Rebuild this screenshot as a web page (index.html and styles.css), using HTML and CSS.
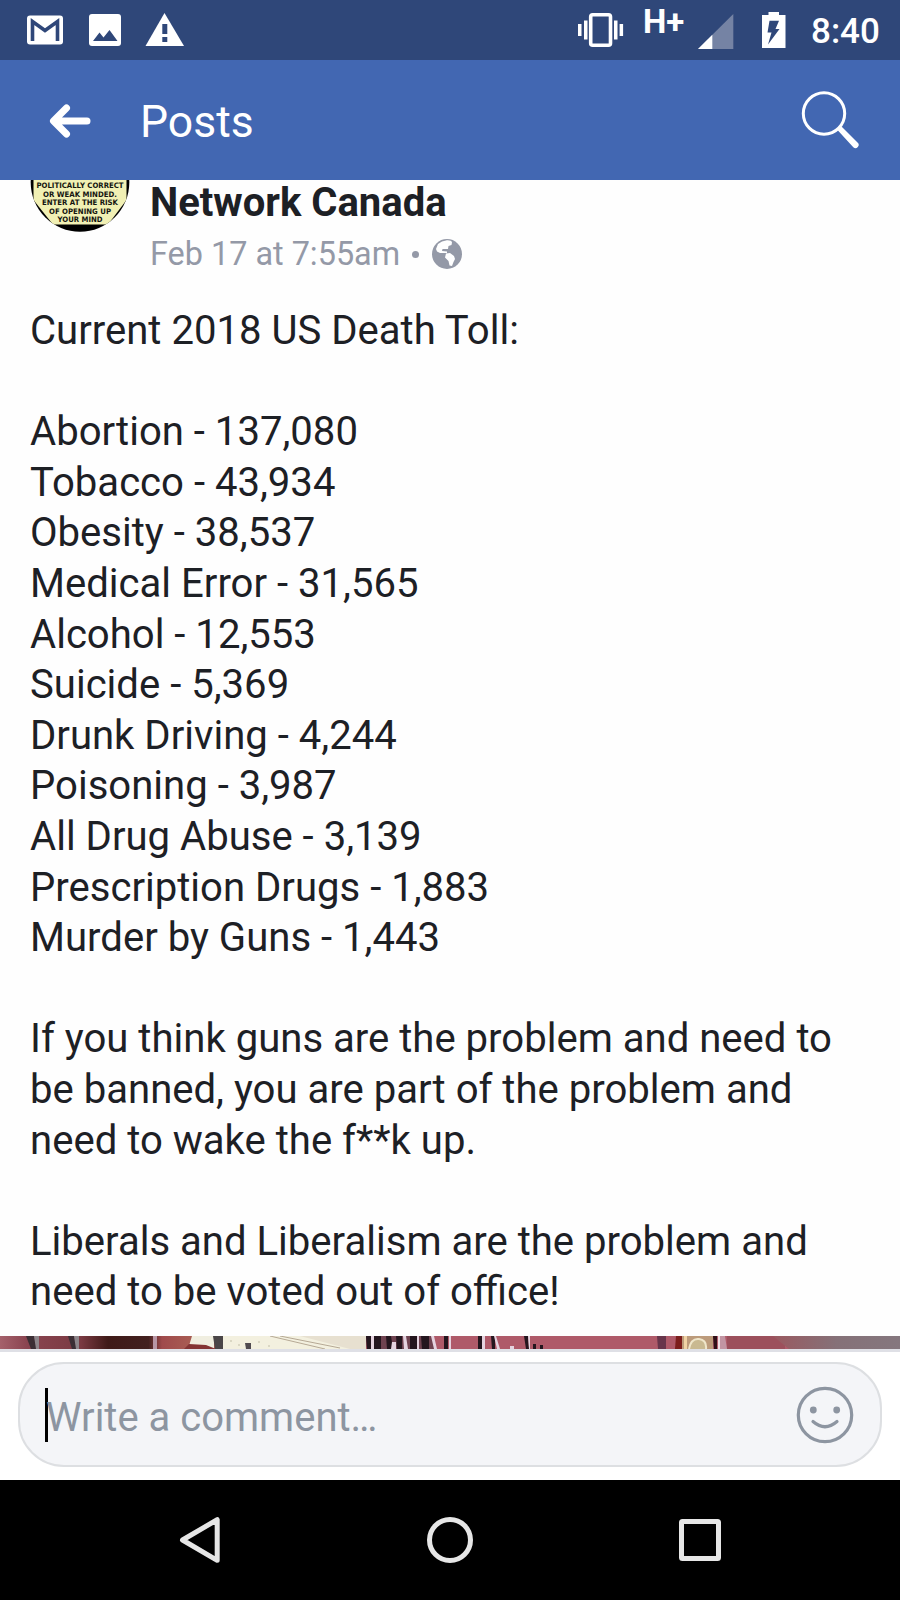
FILE: index.html
```html
<!DOCTYPE html>
<html lang="en">
<head>
  <meta charset="UTF-8">
  <meta name="viewport" content="width=device-width, initial-scale=1.0">
  <title>Posts</title>
  <link rel="stylesheet" href="styles.css">
</head>
<body>
  <!-- Status bar -->
  <div class="status-bar">
    <svg class="status-left" width="200" height="60" viewBox="0 0 200 60">
      <rect x="27" y="15.5" width="36" height="29" rx="3" fill="#fff"/>
      <path d="M32.500 41V21.500L45 30.500L57.500 21.500V41" fill="none" stroke="#2f4779" stroke-width="3.600"/>
      <rect x="89" y="14" width="32" height="32" rx="3" fill="#fff"/>
      <path d="M93 41L99.500 32.500L103.500 37.500L109.500 30L117.500 41Z" fill="#2f4779"/>
      <path d="M164.500 13L184 46H145.500Z" fill="#fff"/>
      <path d="M162.300 24h5v10h-5zM162.300 37h5v5h-5z" fill="#2f4779"/>
    </svg>
    <div class="status-right">
      <svg width="48" height="60" viewBox="576 0 48 60">
        <rect x="590.700" y="14.700" width="19.800" height="30.600" rx="2" fill="none" stroke="#fff" stroke-width="3.600"/>
        <path d="M578 24h3.500v12H578zM584 20.500h3.500v19H584zM614 20.500h3.500v19H614zM619.600 24h3.500v12h-3.500z" fill="#fff"/>
      </svg>
      <span class="network">H+</span>
      <svg width="100" height="60" viewBox="692 0 100 60">
        <path d="M733.300 14V49H698Z" fill="#7583a4"/>
        <path d="M712.300 34.700V49H698Z" fill="#fff"/>
        <path d="M762 15h6.500v-3h10.500v3h6.500v33H762z" fill="#fff"/>
        <path d="M769.500 20.700H779L775.500 29H779.500L768 44.500L771.500 32.500H767.500Z" fill="#2f4779"/>
      </svg>
      <span class="clock">8:40</span>
    </div>
  </div>

  <!-- Header -->
  <div class="header">
    <svg class="back" width="42" height="36" viewBox="0 0 42 36">
      <path d="M38 18H5M17.500 5L4.500 18L17.500 31" fill="none" stroke="#fff" stroke-width="7" stroke-linecap="round" stroke-linejoin="round"/>
    </svg>
    <h1>Posts</h1>
    <svg class="search" width="60" height="60" viewBox="800 90 60 60">
      <circle cx="824" cy="113.500" r="20.700" fill="none" stroke="#fff" stroke-width="3"/>
      <path d="M837 129.500L841.500 126.500L857.500 142.500A3 3 0 0 1 853.300 147.300Z" fill="#fff"/>
    </svg>
  </div>

  <!-- Post -->
  <div class="post">
    <div class="post-head">
      <svg class="avatar" width="100" height="52" viewBox="30 180 100 52">
        <defs>
          <clipPath id="round"><circle cx="80" cy="182.500" r="49.300"/></clipPath>
        </defs>
        <g clip-path="url(#round)">
          <rect x="30" y="180" width="100" height="52" fill="#000"/>
          <path d="M33.500 180H126.500V200L108 224.500H53L33.500 200Z" fill="#f1f0b4"/>
          <g class="avatar-text">
            <text x="80" y="188.300" textLength="87" lengthAdjust="spacingAndGlyphs">POLITICALLY CORRECT</text>
            <text x="80" y="196.700" textLength="74" lengthAdjust="spacingAndGlyphs">OR WEAK MINDED.</text>
            <text x="80" y="205.200" textLength="76" lengthAdjust="spacingAndGlyphs">ENTER AT THE RISK</text>
            <text x="80" y="213.700" textLength="62" lengthAdjust="spacingAndGlyphs">OF OPENING UP</text>
            <text x="80" y="222.200" textLength="45" lengthAdjust="spacingAndGlyphs">YOUR MIND</text>
          </g>
        </g>
      </svg>
      <div class="post-info">
        <h2>Network Canada</h2>
        <div class="date">
          <span class="date-text">Feb 17 at 7:55am</span>
          <span class="dot"></span>
          <svg width="30" height="30" viewBox="0 0 30 30">
            <circle cx="15" cy="15" r="15" fill="#9499a7"/>
            <path d="M14 1.500C17 1 20 2 20 3.500L19.500 6L16.500 7L16 10H10.500L10 12L15 12.500V14H8L5 12.500L4 10L6 5L10 2.500Z" fill="#fff"/>
            <path d="M14 14.500L18 14L22 17L23 20L21.500 23L20 27L17.500 26.500L16.500 22L13 18.500Z" fill="#fff"/>
          </svg>
        </div>
      </div>
    </div>
    <div class="post-text">
      <p>Current 2018 US Death Toll:</p>
      <p>
        Abortion - 137,080<br>
        Tobacco - 43,934<br>
        Obesity - 38,537<br>
        Medical Error - 31,565<br>
        Alcohol - 12,553<br>
        Suicide - 5,369<br>
        Drunk Driving - 4,244<br>
        Poisoning - 3,987<br>
        All Drug Abuse - 3,139<br>
        Prescription Drugs - 1,883<br>
        Murder by Guns - 1,443
      </p>
      <p>
        If you think guns are the problem and need to<br>
        be banned, you are part of the problem and<br>
        need to wake the f**k up.
      </p>
      <p>
        Liberals and Liberalism are the problem and<br>
        need to be voted out of office!
      </p>
    </div>
  </div>

  <!-- Top edge of the attached photo -->
  <svg class="photo" width="900" height="13" viewBox="0 0 900 13">
    <defs>
      <linearGradient id="wall" gradientUnits="userSpaceOnUse" x1="0" x2="900" y1="0" y2="0">
        <stop offset="0" stop-color="#a5616b"/>
        <stop offset="0.030" stop-color="#8a4450"/>
        <stop offset="0.090" stop-color="#7a3a42"/>
        <stop offset="0.120" stop-color="#3f1a18"/>
        <stop offset="0.165" stop-color="#42201f"/>
        <stop offset="0.180" stop-color="#a04a4c"/>
        <stop offset="0.210" stop-color="#a85b52"/>
      </linearGradient>
      <linearGradient id="edge">
        <stop offset="0" stop-color="#9a5960"/>
        <stop offset="0.500" stop-color="#857178"/>
        <stop offset="1" stop-color="#85777e"/>
      </linearGradient>
    </defs>
    <rect width="900" height="13" fill="#af5a69"/>
    <rect width="223" height="13" fill="url(#wall)"/>
    <path d="M26 0h8l3 13h-6zM68 0h6l3 13h-5z" fill="#3b2e34"/>
    <path d="M34 0h5v13h-3zM74 0h5v13h-3z" fill="#8d858a"/>
    <path d="M153 0h4v13h-4z" fill="#b896a5"/>
    <path d="M188 13L192 0H214V13L204 9H190Z" fill="#f0eee0"/>
    <path d="M184 13L189 8L206 9L216 13Z" fill="#843434"/>
    <path d="M213 0h10v13h-8z" fill="#4a4547"/>
    <path d="M223 0H366V13H223Z" fill="#f3f0df"/>
    <path d="M300 0H366V13H350Z" fill="#e7e0d0"/>
    <path d="M270 0L325 13M280 0L340 12" stroke="#b6a995" stroke-width="1"/>
    <path d="M245 7h6v6h-5z" fill="#514b50"/>
    <path d="M230 5h2M238 9h2M258 6h2M268 10h2" stroke="#c2bfa9" stroke-width="1"/>
    <path d="M366 0H434V13H367Z" fill="#6f4350"/>
    <path d="M366 0h5v13h-4zM374 0h7v13h-7zM386 0h5l2 13h-6zM396 0h6v13h-5zM410 0h7v13h-7zM421 0h8v13h-7zM444 0h4v13h-4zM478 0h4v13h-4zM491 0h4v13h-3zM524 0h4l1 13h-3zM533 8h3v5h-3zM540 9h3v5h-3z" fill="#24161e"/>
    <path d="M371 0h3v13h-3zM392 6h4v7h-5zM403 0h3l2 13h-4zM417 0h2v13h-2zM431 0h3l3 13h-3zM449 0h2v13h-2zM482 0h3v13h-3zM494 0h2l4 13h-3zM528 0h2v13h-1zM510 10h4v3h-4z" fill="#e5d3df"/>
    <path d="M657 0h9v13h-8z" fill="#67354b"/>
    <path d="M676 0h6v13h-7z" fill="#7c1e1c"/>
    <path d="M682 0h31v13h-31z" fill="#bc9b7b"/>
    <path d="M684 0h3v13h-3z" fill="#f0d3a5"/>
    <path d="M689 13Q691 2 699 3T706 13" fill="#c9b991" stroke="#efe6ca" stroke-width="2"/>
    <path d="M713 0h4v13h-3z" fill="#2f1018"/>
    <path d="M718 0h7l2 13h-8z" fill="#c295a3"/>
    <path d="M718 0h2v13h-2z" fill="#efdfe4"/>
    <path d="M727 0H785V13H727Z" fill="#9c505c"/>
    <path d="M773 0H900V13H789Z" fill="url(#edge)"/>
  </svg>

  <!-- Comment box -->
  <div class="comment-bar">
    <div class="comment-box">
      <span class="caret"></span>
      <span class="placeholder">Write a comment…</span>
      <svg class="smiley" width="58" height="58" viewBox="0 0 58 58">
        <circle cx="29" cy="29" r="26.700" fill="none" stroke="#8d95a1" stroke-width="3.200"/>
        <circle cx="17.300" cy="24" r="3.400" fill="#8d95a1"/>
        <circle cx="40.700" cy="24" r="3.400" fill="#8d95a1"/>
        <path d="M17 35.500Q29 46 41 35.500" fill="none" stroke="#8d95a1" stroke-width="3.200" stroke-linecap="round"/>
      </svg>
    </div>
  </div>

  <!-- Navigation bar -->
  <div class="nav-bar">
    <svg width="50" height="50" viewBox="0 0 50 50">
      <path d="M42.200 4.700V45.300L7.500 25Z"/>
    </svg>
    <svg width="50" height="50" viewBox="0 0 50 50">
      <circle cx="25" cy="25" r="20.500"/>
    </svg>
    <svg width="50" height="50" viewBox="0 0 50 50">
      <rect x="6.500" y="6.500" width="37" height="37" rx="1"/>
    </svg>
  </div>
</body>
</html>
```
FILE: styles.css
```css
* {
  margin: 0;
  padding: 0;
  box-sizing: border-box;
}

body {
  width: 900px;
  height: 1600px;
  display: flex;
  flex-direction: column;
  overflow: hidden;
  background-color: #fefefe;
  font-family: Roboto, sans-serif;
  color: #1d2025;
}

svg {
  display: block;
  flex-shrink: 0;
}

/* Status bar */
.status-bar {
  height: 60px;
  display: flex;
  justify-content: space-between;
  background-color: #2f4779;
  color: #fff;
}

.status-right {
  display: flex;
  padding-right: 20px;
}

.network {
  width: 68px;
  padding: 4px 0 0 19px;
  font-size: 33px;
  line-height: 36px;
  font-weight: bold;
}

.clock {
  width: 88px;
  padding-left: 19px;
  font-size: 35px;
  line-height: 64px;
  font-weight: 500;
  white-space: nowrap;
}

/* Header */
.header {
  height: 120px;
  display: flex;
  align-items: center;
  padding: 0 40px 0 49px;
  background-color: #4267b2;
  color: #fff;
}

.back {
  margin-top: 1px;
}

.header h1 {
  margin-left: 49px;
  padding-top: 3px;
  font-size: 44.5px;
  font-weight: normal;
}

.search {
  margin-left: auto;
}

/* Post */
.post {
  height: 1156px;
  padding: 0 30px;
}

.post-head {
  height: 126px;
  display: flex;
  gap: 20px;
}

.avatar-text {
  font-family: "DejaVu Sans", sans-serif;
  font-size: 7.5px;
  font-weight: bold;
  text-anchor: middle;
  fill: #14140f;
}

.post-info h2 {
  height: 44px;
  font-size: 40px;
  line-height: 46px;
  font-weight: bold;
}

.date {
  display: flex;
  align-items: center;
  height: 60px;
  font-size: 32.4px;
  color: #9499a7;
}

.dot {
  width: 7px;
  height: 7px;
  margin: 0 13px 0 12px;
  border-radius: 50%;
  background-color: #9499a7;
}

.post-text p {
  margin-bottom: 50.6px;
  font-size: 40.1px;
  line-height: 50.6px;
  white-space: nowrap;
}

/* Comment box */
.comment-bar {
  height: 131px;
  padding: 10px 18px 0;
  border-top: 3px solid #dfe0e6;
  background-color: #fff;
}

.comment-box {
  height: 105px;
  display: flex;
  align-items: center;
  padding: 0 26px 0 25px;
  border: 2px solid #dddfe2;
  border-radius: 46px;
  background-color: #f4f5f8;
}

.caret {
  width: 3px;
  height: 54px;
  background-color: #000;
}

.placeholder {
  margin-left: -2px;
  padding-top: 5px;
  font-size: 40px;
  color: #8d95a1;
}

.smiley {
  margin-left: auto;
}

/* Navigation bar */
.nav-bar {
  height: 120px;
  display: flex;
  justify-content: space-between;
  align-items: center;
  padding: 0 175px;
  background-color: #000;
}

.nav-bar svg {
  fill: none;
  stroke: #e6e6e6;
  stroke-width: 5;
  stroke-linejoin: round;
}
```
